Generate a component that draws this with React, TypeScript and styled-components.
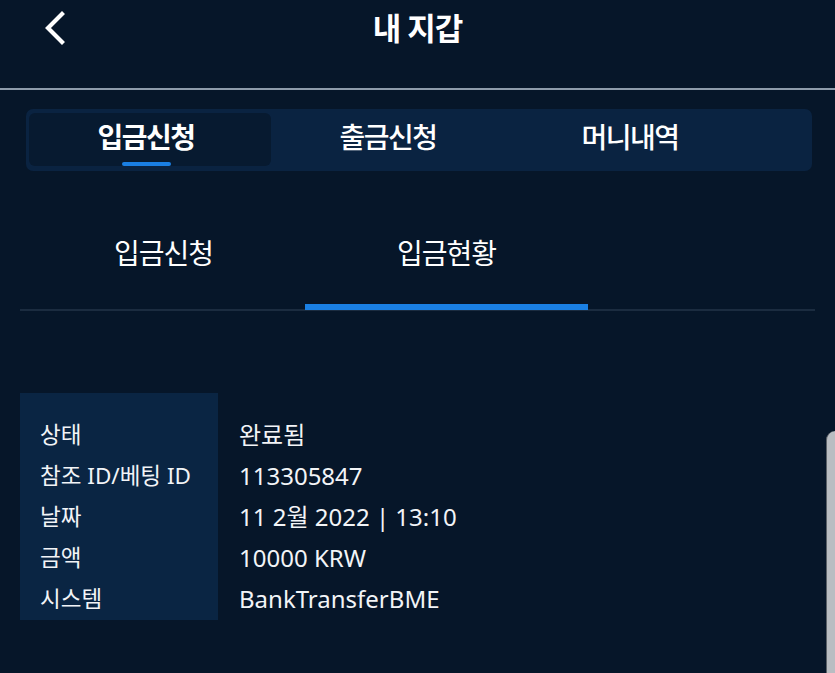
import styled, { createGlobalStyle } from 'styled-components';

const GlobalStyle = createGlobalStyle`
  html, body {
    margin: 0;
    padding: 0;
    background: #061629;
    font-family: "Noto Sans", "Noto Sans CJK KR", sans-serif;
    color: #ffffff;
  }
  * { box-sizing: border-box; }
`;

const mainTabs = ['입금신청', '출금신청', '머니내역'];
const subTabs = ['입금신청', '입금현황'];
const details = [
  { label: '상태', value: '완료됨' },
  { label: '참조 ID/베팅 ID', value: '113305847' },
  { label: '날짜', value: '11 2월 2022 | 13:10' },
  { label: '금액', value: '10000 KRW' },
  { label: '시스템', value: 'BankTransferBME' },
];

export default function App() {
  return (
    <Page>
      <GlobalStyle />
      <Header>
        <BackButton aria-label="back">
          <svg width="24" height="34" viewBox="0 0 24 34" fill="none">
            <path d="M19 3 L5 17 L19 31" stroke="#fff" strokeWidth="4.2" strokeLinecap="square" />
          </svg>
        </BackButton>
        <Title>내 지갑</Title>
      </Header>

      <TabBar>
        {mainTabs.map((t, i) => (
          <MainTab key={t} $active={i === 0}>
            {t}
            {i === 0 && <MainTabMark />}
          </MainTab>
        ))}
      </TabBar>

      <SubTabs>
        {subTabs.map((t, i) => (
          <SubTab key={t} $active={i === 1}>
            {t}
          </SubTab>
        ))}
      </SubTabs>

      <Details>
        <LabelColumn>
          {details.map((d) => (
            <Cell key={d.label} $size={22.5}>
              {d.label}
            </Cell>
          ))}
        </LabelColumn>
        <ValueColumn>
          {details.map((d) => (
            <Cell key={d.label} $size={24}>
              {d.value}
            </Cell>
          ))}
        </ValueColumn>
      </Details>

      <EdgeHandle />
    </Page>
  );
}

const Page = styled.div`
  position: relative;
  width: 835px;
  height: 673px;
  overflow: hidden;
  background: #061629;
`;

const Header = styled.header`
  position: relative;
  height: 90px;
  display: flex;
  align-items: flex-start;
  justify-content: center;
  border-bottom: 2px solid #8e9cab;
`;

const BackButton = styled.button`
  position: absolute;
  left: 43px;
  top: 11px;
  background: none;
  border: 0;
  padding: 0;
  display: flex;
`;

const Title = styled.h1`
  margin: 0;
  padding-top: 9px;
  font-size: 31px;
  font-weight: 700;
  letter-spacing: -1px;
  line-height: 38px;
`;

const TabBar = styled.nav`
  display: flex;
  margin: 19px 23px 0 26px;
  padding: 4px 3px 5px 3px;
  height: 62px;
  background: #0a2341;
  border-radius: 7px;
`;

const MainTab = styled.div<{ $active?: boolean }>`
  position: relative;
  width: 242px;
  display: flex;
  align-items: center;
  justify-content: center;
  padding: 0 8px 7px 0;
  font-size: 28px;
  font-weight: ${(p) => (p.$active ? 700 : 500)};
  letter-spacing: -1.5px;
  border-radius: 6px;
  background: ${(p) => (p.$active ? '#071a30' : 'transparent')};
`;

const MainTabMark = styled.span`
  position: absolute;
  left: 93px;
  bottom: 0;
  width: 49px;
  height: 4px;
  border-radius: 2px;
  background: #1a7fe3;
`;

const SubTabs = styled.div`
  display: flex;
  margin: 0 20px 0 20px;
  padding-left: 2px;
  border-bottom: 2px solid #1b2c40;
`;

const SubTab = styled.div<{ $active?: boolean }>`
  width: 283px;
  height: 139px;
  padding-top: 63px;
  text-align: center;
  font-size: 28px;
  font-weight: 400;
  letter-spacing: -1px;
  line-height: 38px;
  border-bottom: 6px solid ${(p) => (p.$active ? '#1a80e4' : 'transparent')};
  margin-bottom: -1px;
`;

const Details = styled.section`
  display: flex;
  margin: 82px 0 0 20px;
`;

const LabelColumn = styled.div`
  width: 198px;
  padding: 21px 0 1px 20px;
  background: #0a2543;
  display: flex;
  flex-direction: column;
`;

const ValueColumn = styled.div`
  padding: 21px 0 0 21px;
  display: flex;
  flex-direction: column;
`;

const Cell = styled.div<{ $size: number }>`
  height: 41px;
  line-height: 41px;
  font-size: ${(p) => p.$size}px;
  white-space: nowrap;
  color: #f2f4f7;
`;

const EdgeHandle = styled.div`
  position: absolute;
  right: 0;
  top: 431px;
  bottom: 0;
  width: 9px;
  background: #b9bdc2;
  border-left: 1px solid #5b6168;
  border-top-left-radius: 9px;
`;
